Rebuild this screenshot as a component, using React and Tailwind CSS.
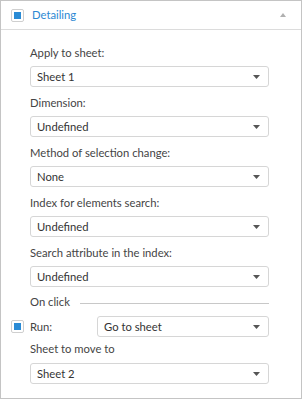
import React from "react";

function Check() {
  return (
    <div className="w-[13px] h-[13px] rounded-[2px] border border-[#cfcfcf] bg-white flex items-center justify-center shrink-0">
      <div className="w-[7px] h-[7px] bg-[#2a8bd5]" />
    </div>
  );
}

function Select({ value, className = "" }) {
  return (
    <div
      className={
        "h-[21px] rounded-[3px] border border-[#d6d6d6] bg-white flex items-center justify-between pl-[6px] pr-[8px] " +
        className
      }
    >
      <span className="leading-[16px] text-[#333]">{value}</span>
      <svg width="7" height="4" viewBox="0 0 7 4" className="mb-[-1px]">
        <path d="M0 0H7L3.5 4Z" fill="#555" />
      </svg>
    </div>
  );
}

function Field({ label, value, first }) {
  return (
    <div className={first ? "" : "mt-[8px]"}>
      <div className="leading-[16px] h-[16px] text-[#444]">{label}</div>
      <Select value={value} className="mt-[5px]" />
    </div>
  );
}

export default function App() {
  return (
    <div className="w-[302px] h-[399px] border border-[#c4c4c4] bg-white font-['Lato',sans-serif] text-[11.25px] flex flex-col">
      <div className="h-[29px] border-b border-[#dcdcdc] flex items-center pl-[10px] pr-[15px] shrink-0">
        <Check />
        <span className="ml-[8px] text-[#2b88d3] leading-[16px]">Detailing</span>
        <svg width="6" height="4" viewBox="0 0 6 4" className="ml-auto">
          <path d="M0 4H6L3 0Z" fill="#b0b0b0" />
        </svg>
      </div>
      <div className="pl-[29px] pr-[32px] pt-[15px] flex flex-col">
        <Field first label="Apply to sheet:" value="Sheet 1" />
        <Field label="Dimension:" value="Undefined" />
        <Field label="Method of selection change:" value="None" />
        <Field label="Index for elements search:" value="Undefined" />
        <Field label="Search attribute in the index:" value="Undefined" />
        <div className="mt-[7px] h-[16px] flex items-center">
          <span className="leading-[16px] text-[#444]">On click</span>
          <div className="ml-[10px] flex-1 h-px bg-[#c8c8c8] mt-[2px]" />
        </div>
        <div className="mt-[6px] flex items-center -ml-[19px]">
          <Check />
          <span className="ml-[6px] leading-[16px] text-[#444] w-[67px]">Run:</span>
          <Select value="Go to sheet" className="flex-1" />
        </div>
        <div className="mt-[4px] leading-[16px] h-[16px] text-[#444]">Sheet to move to</div>
        <Select value="Sheet 2" className="mt-[6px]" />
      </div>
    </div>
  );
}
